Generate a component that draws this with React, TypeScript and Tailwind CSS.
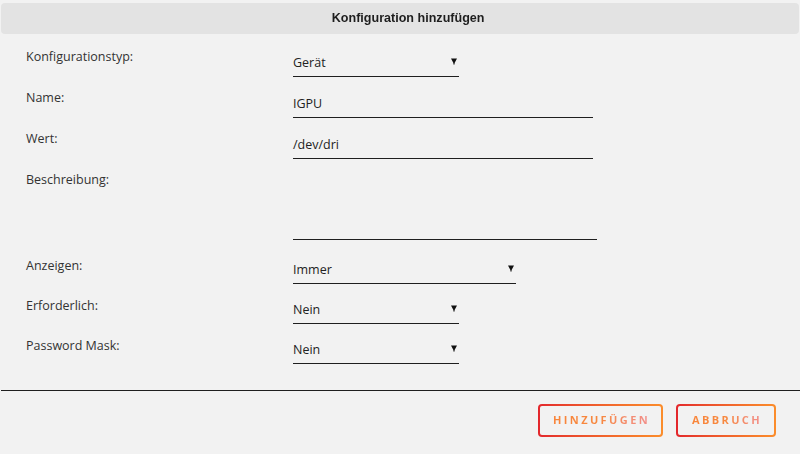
import React from "react";

function Arrow() {
  return (
    <svg width="6" height="7" viewBox="0 0 6 7">
      <polygon points="0,0.5 6,0.5 3.6,5 3.6,6.5 2.4,6.5 2.4,5" fill="#111" />
    </svg>
  );
}

type RowProps = {
  label: string;
  value?: string;
  width: string;
  height: string;
  mt: string;
  select?: boolean;
};

function Row({ label, value, width, height, mt, select }: RowProps) {
  return (
    <div className={`flex items-start ${mt}`}>
      <div className="w-[267px] pt-[4px] text-[12.5px] leading-[16px] text-[#333]">{label}</div>
      <div
        className={`${width} ${height} border-b border-[#1f1f1f] flex items-end justify-between pb-[5px] text-[12.5px] leading-[16px] text-[#222]`}
      >
        <span>{value ?? ""}</span>
        {select ? (
          <span className="pr-[2px] pb-[6px]">
            <Arrow />
          </span>
        ) : null}
      </div>
    </div>
  );
}

function GradButton({ text, width }: { text: string; width: string }) {
  return (
    <div className={`${width} h-[33px] rounded-[4px] p-[2px] bg-gradient-to-r from-[#e3262c] to-[#fb8d2b]`}>
      <div className="w-full h-full rounded-[2px] bg-[#f2f2f2] flex items-center justify-center">
        <span className="text-[11px] font-bold tracking-[2.4px] pl-[2px] bg-gradient-to-r from-[#f9853a] via-[#f7883f] to-[#f28f8c] bg-clip-text text-transparent">
          {text}
        </span>
      </div>
    </div>
  );
}

export default function App() {
  return (
    <div
      className="w-[800px] h-[454px] bg-[#f2f2f2] overflow-hidden"
      style={{ fontFamily: '"Open Sans", "Noto Sans", sans-serif' }}
    >
      <div className="pt-[3px] px-[1px]">
        <div className="h-[31px] rounded-[4px] bg-[#e3e3e3] flex items-center justify-center pl-[16px]">
          <span
            className="text-[13.5px] font-bold text-[#1e1e1e] inline-block scale-x-[0.93]"
            style={{ fontFamily: '"Liberation Sans", Arial, sans-serif' }}
          >
            Konfiguration hinzufügen
          </span>
        </div>
      </div>
      <div className="pl-[26px]">
        <Row label="Konfigurationstyp:" value="Gerät" width="w-[166px]" height="h-[32px]" mt="mt-[11px]" select />
        <Row label="Name:" value="IGPU" width="w-[300px]" height="h-[32px]" mt="mt-[9px]" />
        <Row label="Wert:" value="/dev/dri" width="w-[300px]" height="h-[32px]" mt="mt-[9px]" />
        <Row label="Beschreibung:" width="w-[304px]" height="h-[72px]" mt="mt-[9px]" />
        <Row label="Anzeigen:" value="Immer" width="w-[223px]" height="h-[30px]" mt="mt-[14px]" select />
        <Row label="Erforderlich:" value="Nein" width="w-[166px]" height="h-[30px]" mt="mt-[10px]" select />
        <Row label="Password Mask:" value="Nein" width="w-[166px]" height="h-[30px]" mt="mt-[10px]" select />
      </div>
      <div className="mt-[26px] ml-[1px] border-t border-[#1f1f1f]" />
      <div className="mt-[13px] flex justify-end gap-[13px] pr-[24px]">
        <GradButton text="HINZUFÜGEN" width="w-[125px]" />
        <GradButton text="ABBRUCH" width="w-[100px]" />
      </div>
    </div>
  );
}
